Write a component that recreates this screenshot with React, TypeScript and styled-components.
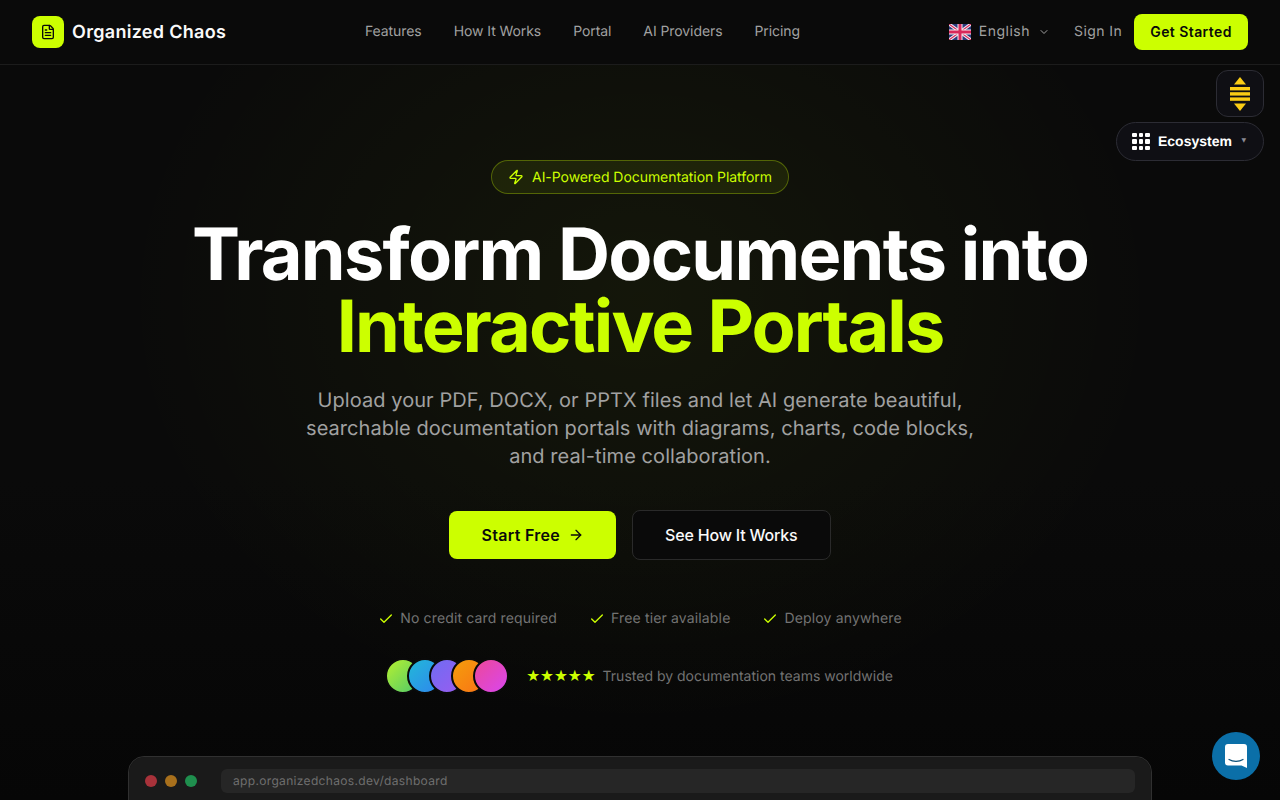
import styled, { createGlobalStyle } from "styled-components";
import { ArrowRight, Check, ChevronDown, FileText, Zap } from "lucide-react";

const GlobalStyle = createGlobalStyle`
  html, body {
    margin: 0;
    height: 100%;
    overflow: hidden;
    background: #0a0a0a;
    font-family: Inter, "Liberation Sans", sans-serif;
    text-rendering: geometricPrecision;
    -webkit-font-smoothing: antialiased;
  }
  * { box-sizing: border-box; }
`;

const navLinks = ["Features", "How It Works", "Portal", "AI Providers", "Pricing"];
const perks = ["No credit card required", "Free tier available", "Deploy anywhere"];
const avatars = [
  "linear-gradient(135deg, #b6f030, #4fc96a)",
  "linear-gradient(135deg, #22b8d8, #2f86ee)",
  "linear-gradient(135deg, #6f6cf2, #9a5cf0)",
  "linear-gradient(135deg, #f59e0b, #f97316)",
  "linear-gradient(135deg, #ec4899, #d946ef)",
];

const App = () => (
  <Page>
    <GlobalStyle />
    <Header>
      <Brand>
        <BrandMark>
          <FileText size={16} strokeWidth={2} color="#0a0a0a" />
        </BrandMark>
        <BrandName>Organized Chaos</BrandName>
      </Brand>
      <Nav>
        {navLinks.map((link) => (
          <NavLink key={link}>{link}</NavLink>
        ))}
      </Nav>
      <HeaderActions>
        <LanguageButton>
          <svg width="22" height="16" viewBox="0 0 22 16">
            <rect width="22" height="16" rx="2" fill="#2c3a7c" />
            <path d="M0 0l22 16M22 0L0 16" stroke="#f4eef2" strokeWidth="3.2" />
            <path d="M0 0l22 16M22 0L0 16" stroke="#d8285a" strokeWidth="1.1" />
            <path d="M11 0v16M0 8h22" stroke="#f4eef2" strokeWidth="5" />
            <path d="M11 0v16M0 8h22" stroke="#d8285a" strokeWidth="3" />
          </svg>
          <span>English</span>
          <ChevronDown size={12} strokeWidth={2} />
        </LanguageButton>
        <SignIn>Sign In</SignIn>
        <GetStarted>Get Started</GetStarted>
      </HeaderActions>
    </Header>

    <ThemeToggle aria-label="Toggle">
      <svg width="20" height="34" viewBox="0 0 20 34" fill="#facc15">
        <path d="M10 0l6 7.5H4z" />
        <rect y="10" width="20" height="3.4" />
        <rect y="15.2" width="20" height="3.4" />
        <rect y="20.4" width="20" height="3.4" />
        <path d="M4 26.5h12L10 34z" />
      </svg>
    </ThemeToggle>
    <EcosystemPill>
      <DotGrid>
        {Array.from({ length: 9 }).map((_, i) => (
          <Dot key={i} />
        ))}
      </DotGrid>
      <EcosystemLabel>Ecosystem</EcosystemLabel>
      <Caret>▼</Caret>
    </EcosystemPill>

    <Hero>
      <Badge>
        <Zap size={16} strokeWidth={2} />
        <span>AI-Powered Documentation Platform</span>
      </Badge>
      <Title>
        Transform Documents into
        <Accent>Interactive Portals</Accent>
      </Title>
      <Subtitle>
        Upload your PDF, DOCX, or PPTX files and let AI generate beautiful,
        <br />
        searchable documentation portals with diagrams, charts, code blocks,
        <br />
        and real-time collaboration.
      </Subtitle>
      <Actions>
        <PrimaryButton>
          Start Free
          <ArrowRight size={16} strokeWidth={2} />
        </PrimaryButton>
        <SecondaryButton>See How It Works</SecondaryButton>
      </Actions>
      <Perks>
        {perks.map((perk) => (
          <Perk key={perk}>
            <Check size={16} strokeWidth={2} color="#ccff00" />
            {perk}
          </Perk>
        ))}
      </Perks>
      <Trust>
        <Avatars>
          {avatars.map((fill) => (
            <Avatar key={fill} $fill={fill} />
          ))}
        </Avatars>
        <Stars>★★★★★</Stars>
        <TrustText>Trusted by documentation teams worldwide</TrustText>
      </Trust>
      <BrowserFrame>
        <BrowserBar>
          <Light $color="#a8323a" />
          <Light $color="#a8701c" />
          <Light $color="#1f8f4e" />
          <UrlField>app.organizedchaos.dev/dashboard</UrlField>
        </BrowserBar>
      </BrowserFrame>
    </Hero>

    <ChatBubble aria-label="Chat">
      <svg width="24" height="26" viewBox="0 0 24 26">
        <path
          d="M4 1h16a3 3 0 0 1 3 3v21l-5.5-2.6H4a3 3 0 0 1-3-3V4a3 3 0 0 1 3-3z"
          fill="#fff"
        />
        <path d="M5 16.5c4 2.4 10 2.4 14 0" fill="none" stroke="#0a4f78" strokeWidth="1.2" strokeLinecap="round" />
      </svg>
    </ChatBubble>
  </Page>
);

const Page = styled.div`
  position: relative;
  width: 1280px;
  height: 800px;
  overflow: hidden;
  background:
    radial-gradient(ellipse 520px 430px at 640px 300px, rgba(204, 255, 0, 0.05), rgba(204, 255, 0, 0) 100%),
    linear-gradient(#0a0a0a 60%, #060606);
`;

const Header = styled.header`
  height: 65px;
  padding: 0 32px;
  display: flex;
  justify-content: space-between;
  align-items: center;
  background: #0a0a0a;
  border-bottom: 1px solid #1c1c1c;
`;

const Brand = styled.div`
  display: flex;
  align-items: center;
  gap: 8px;
`;

const BrandMark = styled.div`
  width: 32px;
  height: 32px;
  border-radius: 8px;
  background: #ccff00;
  display: flex;
  align-items: center;
  justify-content: center;
`;

const BrandName = styled.span`
  padding-top: 2px;
  color: #fafafa;
  font-size: 18px;
  line-height: 28px;
  font-weight: 600;
  letter-spacing: 0.3px;
`;

const Nav = styled.nav`
  margin-left: 2px;
  display: flex;
  gap: 32px;
`;

const NavLink = styled.a`
  color: #a1a1a1;
  font-size: 14px;
  line-height: 20px;
  letter-spacing: -0.08px;
`;

const HeaderActions = styled.div`
  display: flex;
  align-items: center;
  justify-content: flex-end;
  gap: 12px;
`;

const LanguageButton = styled.div`
  display: flex;
  align-items: center;
  gap: 8px;
  padding: 0 12px;
  color: #a1a1a1;
  font-size: 14px;
  line-height: 20px;
  letter-spacing: 0.5px;
`;

const SignIn = styled.a`
  color: #a1a1a1;
  font-size: 14px;
  line-height: 20px;
  letter-spacing: 0.43px;
`;

const GetStarted = styled.button`
  height: 36px;
  padding: 0 16px 1px;
  border: none;
  border-radius: 8px;
  background: #ccff00;
  color: #0a0a0a;
  font: 600 14px Inter, sans-serif;
  letter-spacing: 0.43px;
`;

const ThemeToggle = styled.div`
  position: absolute;
  top: 70px;
  right: 16px;
  width: 48px;
  height: 47px;
  border: 1px solid #2c2c34;
  border-radius: 12px;
  background: #0f0f14;
  display: flex;
  align-items: center;
  justify-content: center;
`;

const EcosystemPill = styled.div`
  position: absolute;
  top: 122px;
  right: 16px;
  width: 148px;
  height: 39px;
  padding: 0 15px;
  border: 1px solid #2c2c34;
  border-radius: 20px;
  background: #0f0f14;
  display: flex;
  align-items: center;
`;

const DotGrid = styled.div`
  display: grid;
  grid-template-columns: repeat(3, 4.5px);
  gap: 2px;
`;

const Dot = styled.span`
  width: 4.5px;
  height: 4.5px;
  background: #fff;
  border-radius: 1px;
`;

const EcosystemLabel = styled.span`
  margin-left: 8.5px;
  padding-bottom: 2px;
  color: #fff;
  font: 600 14px "Liberation Sans", Arial, sans-serif;
`;

const Caret = styled.span`
  margin: 0 2px 0 auto;
  padding-bottom: 2px;
  color: #8a8a92;
  font: 6px "DejaVu Sans", sans-serif;
`;

const Hero = styled.main`
  padding-top: 95px;
  display: flex;
  flex-direction: column;
  align-items: center;
`;

const Badge = styled.div`
  height: 34px;
  padding: 0 16px;
  display: flex;
  align-items: center;
  gap: 8px;
  border: 1px solid rgba(204, 255, 0, 0.3);
  border-radius: 17px;
  background: rgba(204, 255, 0, 0.08);
  color: #ccff00;
  font-size: 14px;
  letter-spacing: -0.06px;
`;

const Title = styled.h1`
  margin: 25px 0 0;
  color: #fff;
  font-size: 72px;
  line-height: 72px;
  font-weight: 700;
  letter-spacing: -1.71px;
  text-align: center;
`;

const Accent = styled.span`
  display: block;
  color: #ccff00;
  letter-spacing: -1.92px;
`;

const Subtitle = styled.p`
  margin: 23px 0 0;
  color: #a1a1a1;
  font-size: 20px;
  line-height: 28px;
  letter-spacing: 0.07px;
  text-align: center;
`;

const Actions = styled.div`
  margin-top: 40px;
  display: flex;
  align-items: center;
  gap: 16px;
`;

const PrimaryButton = styled.button`
  height: 48px;
  padding: 0 32px;
  display: flex;
  align-items: center;
  gap: 8px;
  border: none;
  border-radius: 8px;
  background: #ccff00;
  color: #0a0a0a;
  font: 600 16px Inter, sans-serif;
  letter-spacing: 0.3px;
`;

const SecondaryButton = styled.button`
  height: 50px;
  padding: 0 32px;
  border: 1px solid #2a2a2a;
  border-radius: 8px;
  background: #0a0a0a;
  color: #fafafa;
  font: 500 16px Inter, sans-serif;
  letter-spacing: -0.19px;
`;

const Perks = styled.div`
  margin-top: 49px;
  display: flex;
  gap: 32px;
`;

const Perk = styled.div`
  display: flex;
  align-items: center;
  gap: 6px;
  color: #737373;
  font-size: 14px;
  line-height: 20px;
  letter-spacing: 0.15px;
`;

const Trust = styled.div`
  margin-top: 29px;
  padding-right: 2px;
  display: flex;
  align-items: center;
`;

const Avatars = styled.div`
  display: flex;
  margin-right: 17px;
`;

const Avatar = styled.span<{ $fill: string }>`
  width: 36px;
  height: 36px;
  border: 2px solid #0a0a0a;
  border-radius: 50%;
  background: ${(p) => p.$fill};

  & + & {
    margin-left: -14px;
  }
`;

const Stars = styled.span`
  color: #ccff00;
  font: 15.5px "DejaVu Sans", sans-serif;
  margin-right: 7px;
`;

const TrustText = styled.span`
  color: #737373;
  font-size: 14px;
`;

const BrowserFrame = styled.div`
  margin-top: 62px;
  width: 1024px;
  height: 200px;
  border: 1px solid #303030;
  border-radius: 16px;
  background: #141414;
`;

const BrowserBar = styled.div`
  height: 48px;
  padding: 0 16px;
  display: flex;
  align-items: center;
  gap: 8px;
  background: #1a1a1a;
  border-radius: 16px 16px 0 0;
`;

const Light = styled.span<{ $color: string }>`
  width: 12px;
  height: 12px;
  border-radius: 50%;
  background: ${(p) => p.$color};
`;

const UrlField = styled.div`
  margin-left: 16px;
  flex: 1;
  height: 24px;
  padding: 0 12px 2px;
  display: flex;
  align-items: center;
  border-radius: 6px;
  background: #262626;
  color: #6f6f6f;
  font-size: 12px;
  letter-spacing: 0.33px;
`;

const ChatBubble = styled.div`
  position: absolute;
  left: 1212px;
  top: 732px;
  width: 48px;
  height: 48px;
  border-radius: 50%;
  background: #0b6fa8;
  display: flex;
  align-items: center;
  justify-content: center;
`;

export default App;
